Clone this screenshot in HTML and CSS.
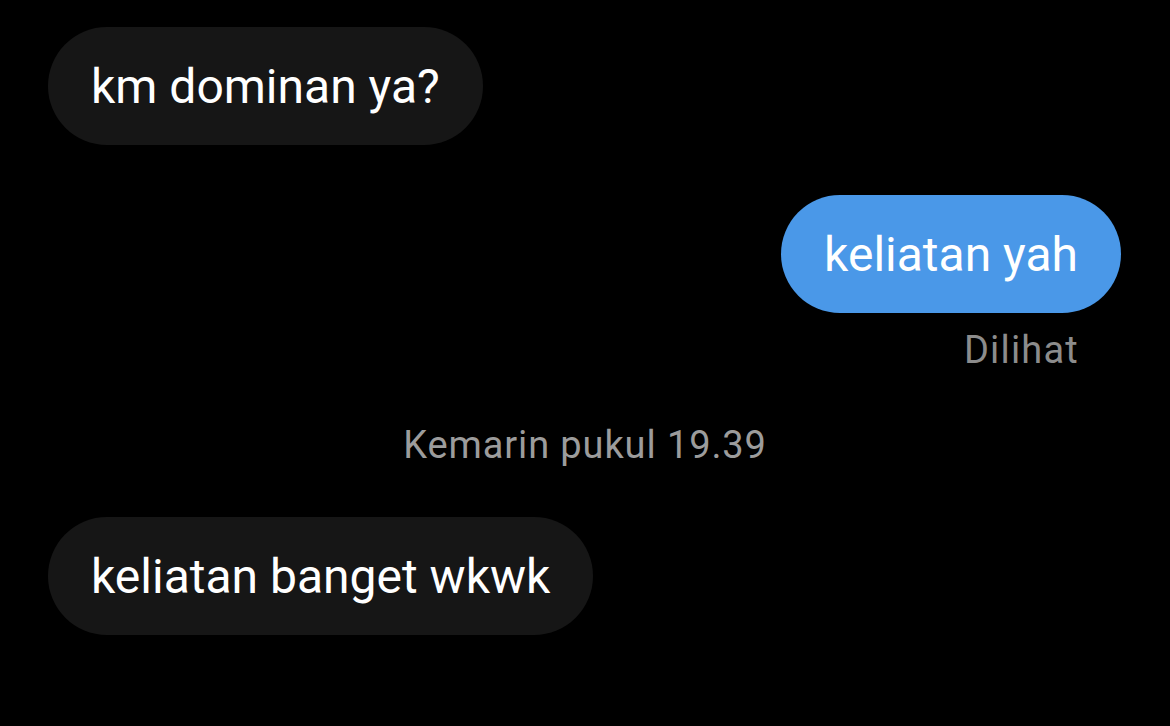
FILE: index.html
```html
<!DOCTYPE html>
<html lang="id">
<head>
<meta charset="utf-8">
<link rel="stylesheet" href="styles.css">
</head>
<body>
<main class="chat">
  <div class="row left"><div class="bubble in">km dominan ya?</div></div>
  <div class="row right"><div class="bubble out">keliatan yah</div></div>
  <div class="row right"><div class="seen">Dilihat</div></div>
  <div class="stamp">Kemarin pukul 19.39</div>
  <div class="row left"><div class="bubble in">keliatan banget wkwk</div></div>
</main>
</body>
</html>
```
FILE: styles.css
```css
html, body {
  margin: 0;
  padding: 0;
  background: #000;
  width: 1170px;
  height: 726px;
  overflow: hidden;
}
.chat {
  display: flex;
  flex-direction: column;
  padding: 27px 49px 0 48px;
  font-family: Roboto, "Noto Sans", sans-serif;
}
.row {
  display: flex;
}
.row.left { justify-content: flex-start; }
.row.right { justify-content: flex-end; }
.bubble {
  height: 118px;
  box-sizing: border-box;
  padding: 0 43px;
  border-radius: 59px;
  display: flex;
  align-items: center;
  font-size: 48px;
  color: #fff;
  white-space: nowrap;
}
.bubble.in { background: #161616; }
.bubble.out { background: #4a98e8; margin-top: 50px; }
.seen {
  color: #8c8c8c;
  font-size: 38px;
  letter-spacing: 1.2px;
  line-height: 40px;
  margin-top: 17px;
  margin-right: 42px;
}
.stamp {
  color: #9c9c9c;
  font-size: 38px;
  letter-spacing: 0.9px;
  line-height: 40px;
  margin-top: 55px;
  text-align: center;
  margin-right: -1px;
}
.stamp + .row { margin-top: 52px; }
```
